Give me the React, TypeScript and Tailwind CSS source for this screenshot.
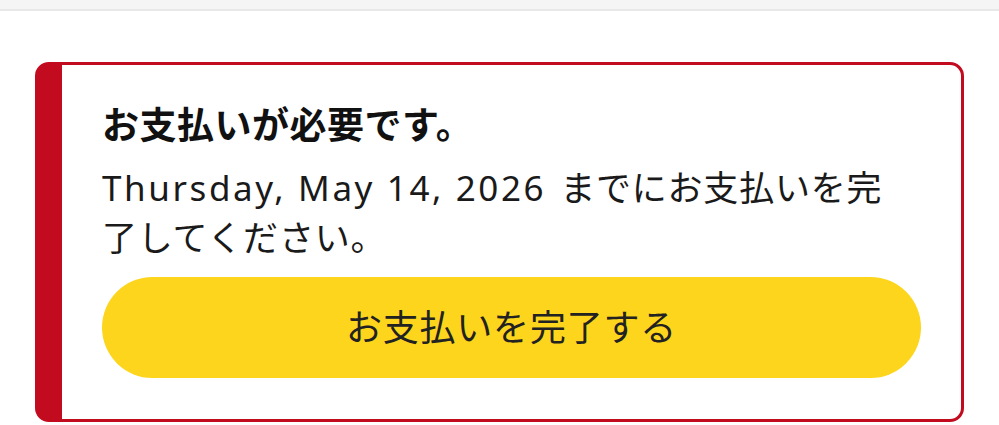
export default function App() {
  return (
    <div
      className="h-[425px] w-[999px] overflow-hidden bg-white"
      style={{ fontFamily: '"Noto Sans", "Noto Sans CJK JP", sans-serif' }}
    >
      <div className="h-[11px] border-b-2 border-[#e8e8e8] bg-[#f5f5f5]" />
      <div className="px-[35px] pt-[51px]">
        <div className="rounded-[14px] border-[3px] border-l-[27px] border-[#c20b1f] px-[40px] pb-[41px] pt-[35px]">
          <h2 className="text-[37px] font-bold leading-[50px] tracking-[0.5px] text-[#111]">
            お支払いが必要です。
          </h2>
          <p className="mt-[13px] text-[35px] leading-[50px] tracking-[0.8px] text-[#1a1a1a]">
            <span className="tracking-[2.6px]">Thursday, May 14, 2026</span>
            <span className="ml-[14px]">
              までにお支払いを完
              <br />
              了してください。
            </span>
          </p>
          <button
            type="button"
            className="mt-[14px] flex h-[101px] w-full items-center justify-center rounded-full bg-[#fdd51c] text-[36px] tracking-[0.8px] text-[#222]"
          >
            お支払いを完了する
          </button>
        </div>
      </div>
    </div>
  );
}
